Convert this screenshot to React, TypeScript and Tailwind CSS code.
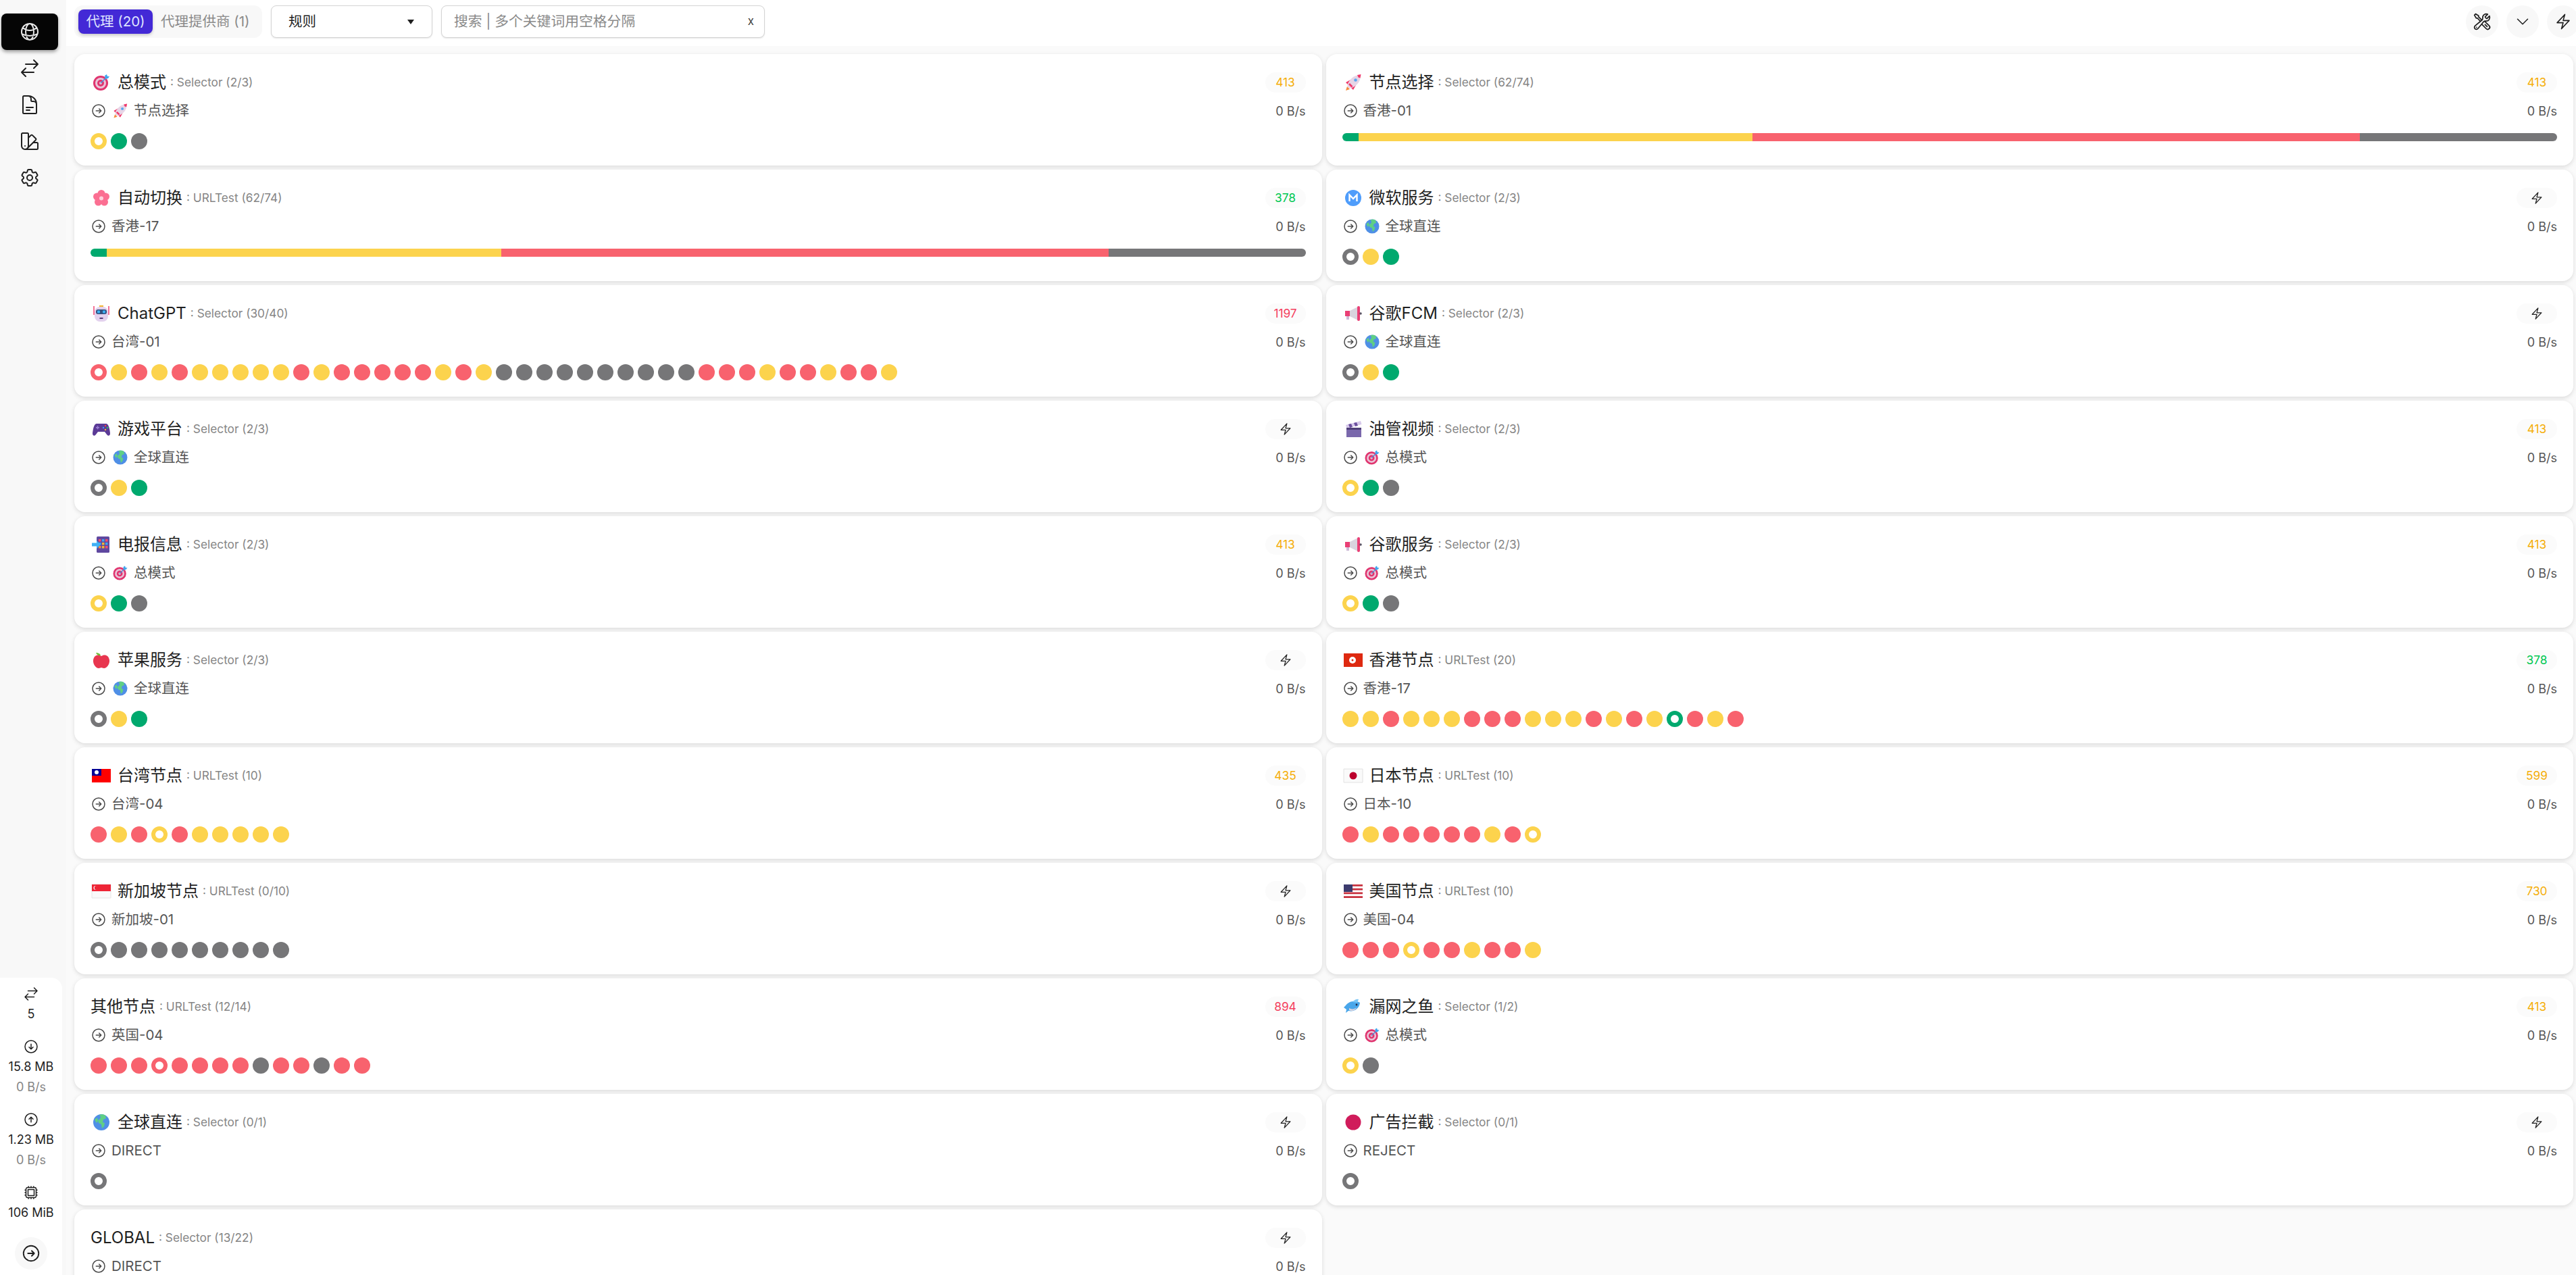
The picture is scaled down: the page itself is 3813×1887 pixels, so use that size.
import React from "react";
import {
  HiOutlineGlobeAlt,
  HiOutlineArrowsRightLeft,
  HiOutlineDocumentText,
  HiOutlineSwatch,
  HiOutlineCog6Tooth,
  HiOutlineWrenchScrewdriver,
  HiOutlineChevronDown,
  HiOutlineBolt,
  HiOutlineArrowRightCircle,
  HiOutlineArrowDownCircle,
  HiOutlineArrowUpCircle,
  HiOutlineCpuChip,
} from "react-icons/hi2";

const art: Record<string, React.ReactNode> = {
  target: (
    <>
      <circle cx="15" cy="17" r="11" fill="#e0356f" />
      <circle cx="15" cy="17" r="8" fill="#eac4d8" />
      <circle cx="15" cy="17" r="5" fill="#e0356f" />
      <circle cx="15" cy="17" r="2" fill="#eac4d8" />
      <path d="M15 17 L24 8" stroke="#4a8fd8" strokeWidth="1.6" />
      <path d="M21 6l3-2 1 3 3 0-2 3-4 1z" fill="#3fa6ee" />
    </>
  ),
  rocket: (
    <>
      <path d="M5 28l2-6 4 4z" fill="#f58b3c" />
      <path d="M12 12l-7 4 3 3 5-1zM20 20l-4 7-3-3 1-5z" fill="#f0386b" />
      <ellipse cx="17" cy="15" rx="12" ry="6" transform="rotate(-45 17 15)" fill="#e7d5e6" />
      <path d="M22 5l5.500-1-1 5.500-3-1z" fill="#f0386b" />
      <circle cx="19.500" cy="12.500" r="2.300" fill="#5aa7ef" />
      <path d="M9 19l4.500 4.500 2-2-4.500-4.500z" fill="#f0386b" />
    </>
  ),
  blossom: (
    <>
      <circle cx="16" cy="9.500" r="5.500" fill="#fb6f92" />
      <circle cx="9.500" cy="14" r="5.500" fill="#fb6f92" />
      <circle cx="22.500" cy="14" r="5.500" fill="#fb6f92" />
      <circle cx="11.500" cy="22" r="5.500" fill="#fb6f92" />
      <circle cx="20.500" cy="22" r="5.500" fill="#fb6f92" />
      <circle cx="16" cy="16.500" r="3" fill="#ffd1dc" />
    </>
  ),
  ms: (
    <>
      <circle cx="16" cy="16" r="12" fill="#4f9dfb" />
      <path d="M10.500 21V11.500L16 17l5.500-5.500V21" stroke="#fff" strokeWidth="2.400" fill="none" />
    </>
  ),
  robot: (
    <>
      <path d="M5 5v13M27 5v13" stroke="#f0386b" strokeWidth="1.400" />
      <rect x="13" y="4" width="6" height="3" fill="#f2b632" />
      <rect x="6" y="6" width="20" height="22" rx="8" fill="#e3d2ee" />
      <rect x="8" y="10" width="16" height="7" rx="3" fill="#33507d" />
      <rect x="10" y="11.500" width="4" height="4" rx="1" fill="#3fb1f5" />
      <rect x="18" y="11.500" width="4" height="4" rx="1" fill="#3fb1f5" />
      <rect x="13.500" y="22" width="5" height="2" fill="#5a3d7a" />
    </>
  ),
  mega: (
    <>
      <rect x="6" y="19" width="4" height="6" fill="#cdb8d6" />
      <rect x="4" y="12" width="7" height="8" fill="#ea3f75" />
      <path d="M11 12l12-6v20l-12-6z" fill="#d9d4de" />
      <rect x="22" y="5" width="4" height="22" rx="2" fill="#ea3f75" />
      <circle cx="27" cy="16" r="1.800" fill="#5c5566" />
    </>
  ),
  game: (
    <>
      <path d="M9 8h14c3 0 5 5 6 14 .4 4-3 5-5 2l-3-4H11l-3 4c-2 3-5.400 2-5-2C4 13 6 8 9 8z" fill="#5b3a96" />
      <rect x="8" y="13" width="5" height="1.600" fill="#9a7fd4" />
      <rect x="9.700" y="11.300" width="1.600" height="5" fill="#9a7fd4" />
      <circle cx="22" cy="11" r="1.200" fill="#ef4444" />
      <circle cx="25" cy="14" r="1.200" fill="#22c55e" />
      <circle cx="19" cy="14" r="1.200" fill="#3b9cf0" />
      <circle cx="22" cy="17" r="1.200" fill="#f2b632" />
    </>
  ),
  clap: (
    <>
      <rect x="6" y="14" width="22" height="14" fill="#7a68ac" />
      <path d="M5 10l22-6 1.500 5-22 6z" fill="#d6c8ea" />
      <path d="M9 9l4-1 2 5-4 1zM17 7l4-1 2 5-4 1z" fill="#6b4f9e" />
      <rect x="6" y="14" width="22" height="3" fill="#4f3f78" />
    </>
  ),
  tele: (
    <>
      <rect x="9" y="4" width="19" height="24" rx="1.500" fill="#5f48a0" />
      <g>
        <rect x="12" y="8" width="3.500" height="3.500" fill="#f0506e" />
        <rect x="17" y="8" width="3.500" height="3.500" fill="#3fa6ee" />
        <rect x="22" y="8" width="3.500" height="3.500" fill="#f0506e" />
        <rect x="12" y="13" width="3.500" height="3.500" fill="#3fa6ee" />
        <rect x="17" y="13" width="3.500" height="3.500" fill="#f2b632" />
        <rect x="22" y="13" width="3.500" height="3.500" fill="#3fa6ee" />
        <rect x="12" y="18" width="3.500" height="3.500" fill="#f58b3c" />
        <rect x="17" y="18" width="3.500" height="3.500" fill="#f2b632" />
        <rect x="22" y="18" width="3.500" height="3.500" fill="#f0506e" />
      </g>
      <path d="M2 13.500h7V10l6 6-6 6v-3.500H2z" fill="#3fb1f5" />
    </>
  ),
  apple: (
    <>
      <path d="M16 10c4-3 11-2 12 6 .6 6-4 12-8 12-2 0-3-1-4-1s-2 1-4 1c-4 0-8.600-6-8-12 1-8 8-9 12-6z" fill="#e8364f" />
      <path d="M15 9C14 6 11 5 8 5c1 3 4 5 7 4z" fill="#6fbf3a" />
    </>
  ),
  fish: (
    <>
      <path d="M5 14c5-7 15-8 21-4-1 9-9 14-17 12l-4 3 1-5-4-3z" fill="#49a6ea" />
      <path d="M15 9c3-4 7-5 9-4l-2 5z" fill="#7cc6f5" />
      <circle cx="21" cy="13" r="1.400" fill="#1f2d4d" />
      <path d="M10 18c3 2 8 2 11-1-2 5-8 6-11 4z" fill="#d8d2de" />
    </>
  ),
  earth: (
    <>
      <circle cx="16" cy="16" r="12" fill="#4f8fe6" />
      <path d="M13 5c3-1 7-1 9 1l1 4-4 2-1 4 3 1-1 5-3 3-1-6-4-2-1-4 3-2 1-3z" fill="#5fcf85" />
      <path d="M6 12l4-3 1 5-2 3z" fill="#5fcf85" />
    </>
  ),
  ad: <circle cx="16" cy="16" r="11.500" fill="#d01c5b" />,
  hk: (
    <>
      <path d="M2 6h28v20H2z" fill="#de2910" />
      <circle cx="15" cy="16" r="5" fill="#fff" />
      <circle cx="15" cy="16" r="1.500" fill="#de2910" />
    </>
  ),
  tw: (
    <>
      <path d="M2 6h28v20H2z" fill="#fe0000" />
      <rect x="2" y="6" width="14" height="10" fill="#000095" />
      <circle cx="9" cy="11" r="3" fill="#fff" />
    </>
  ),
  jp: (
    <>
      <path d="M2 6h28v20H2z" fill="#fafafa" stroke="#e2e2e2" strokeWidth="1" />
      <circle cx="16" cy="16" r="5.500" fill="#bc002d" />
    </>
  ),
  sg: (
    <>
      <path d="M2 6h28v20H2z" fill="#fafafa" stroke="#e6e6e6" strokeWidth="1" />
      <path d="M2 6h28v10H2z" fill="#ee2536" />
      <circle cx="7.500" cy="11" r="3" fill="#fff" />
      <circle cx="8.700" cy="11" r="3" fill="#ee2536" />
    </>
  ),
  us: (
    <>
      <path d="M2 6h28v20H2z" fill="#fff" />
      <path d="M2 6h28v2.800H2zM2 11.700h28v2.800H2zM2 17.400h28v2.800H2zM2 23.200h28V26H2z" fill="#c8313e" />
      <rect x="2" y="6" width="13" height="11" fill="#3c3b6e" />
    </>
  ),
};

function Emoji({ name, size }: { name: string; size: "title" | "now" }) {
  return (
    <svg
      viewBox="0 0 32 32"
      className={size === "title" ? "w-8 h-8 shrink-0 mr-2" : "w-7 h-7 shrink-0 -ml-[1px] mr-[6px]"}
    >
      {art[name]}
    </svg>
  );
}

const dotClass: Record<string, string> = {
  y: "bg-[#fcd34d]",
  r: "bg-[#f8626e]",
  g: "bg-[#00a96e]",
  x: "bg-[#767678]",
  Y: "bg-white border-[6px] border-[#fcd34d]",
  R: "bg-white border-[6px] border-[#f8626e]",
  G: "bg-white border-[6px] border-[#00a96e]",
  X: "bg-white border-[6px] border-[#767678]",
};

function Dots({ s }: { s: string }) {
  return (
    <div className="flex gap-[6px] h-6">
      {s.split("").map((c, i) => (
        <span key={i} className={"w-6 h-6 rounded-full " + dotClass[c]} />
      ))}
    </div>
  );
}

function Bar() {
  const segs: [number, string][] = [
    [1, "bg-[#00a96e]"],
    [24, "bg-[#fcd34d]"],
    [37, "bg-[#f8626e]"],
    [12, "bg-[#767678]"],
  ];
  return (
    <div className="flex h-3 mt-[6px] rounded-full overflow-hidden">
      {segs.map(([n, c], i) => (
        <div key={i} className={c} style={{ flexGrow: n, flexBasis: 0 }} />
      ))}
    </div>
  );
}

type P = {
  t: string;
  e?: string;
  k: string;
  lat?: string;
  lc?: string;
  nowE?: string;
  now: string;
  dots?: string;
};

const Y = "text-[#f5ae0a]";
const G = "text-[#00c853]";
const R = "text-[#f43f5e]";

const proxies: P[] = [
  { t: "总模式", e: "target", k: "Selector (2/3)", lat: "413", lc: Y, nowE: "rocket", now: "节点选择", dots: "Ygx" },
  { t: "节点选择", e: "rocket", k: "Selector (62/74)", lat: "413", lc: Y, now: "香港-01" },
  { t: "自动切换", e: "blossom", k: "URLTest (62/74)", lat: "378", lc: G, now: "香港-17" },
  { t: "微软服务", e: "ms", k: "Selector (2/3)", nowE: "earth", now: "全球直连", dots: "Xyg" },
  { t: "ChatGPT", e: "robot", k: "Selector (30/40)", lat: "1197", lc: R, now: "台湾-01", dots: "Ryryryyyyyryrrrrryryxxxxxxxxxxrrryrryrry" },
  { t: "谷歌FCM", e: "mega", k: "Selector (2/3)", nowE: "earth", now: "全球直连", dots: "Xyg" },
  { t: "游戏平台", e: "game", k: "Selector (2/3)", nowE: "earth", now: "全球直连", dots: "Xyg" },
  { t: "油管视频", e: "clap", k: "Selector (2/3)", lat: "413", lc: Y, nowE: "target", now: "总模式", dots: "Ygx" },
  { t: "电报信息", e: "tele", k: "Selector (2/3)", lat: "413", lc: Y, nowE: "target", now: "总模式", dots: "Ygx" },
  { t: "谷歌服务", e: "mega", k: "Selector (2/3)", lat: "413", lc: Y, nowE: "target", now: "总模式", dots: "Ygx" },
  { t: "苹果服务", e: "apple", k: "Selector (2/3)", nowE: "earth", now: "全球直连", dots: "Xyg" },
  { t: "香港节点", e: "hk", k: "URLTest (20)", lat: "378", lc: G, now: "香港-17", dots: "yyryyyrrryyyryryGryr" },
  { t: "台湾节点", e: "tw", k: "URLTest (10)", lat: "435", lc: Y, now: "台湾-04", dots: "ryrYryyyyy" },
  { t: "日本节点", e: "jp", k: "URLTest (10)", lat: "599", lc: Y, now: "日本-10", dots: "ryrrrrryrY" },
  { t: "新加坡节点", e: "sg", k: "URLTest (0/10)", now: "新加坡-01", dots: "Xxxxxxxxxx" },
  { t: "美国节点", e: "us", k: "URLTest (10)", lat: "730", lc: Y, now: "美国-04", dots: "rrrYrryrry" },
  { t: "其他节点", k: "URLTest (12/14)", lat: "894", lc: R, now: "英国-04", dots: "rrrRrrrrxrrxrr" },
  { t: "漏网之鱼", e: "fish", k: "Selector (1/2)", lat: "413", lc: Y, nowE: "target", now: "总模式", dots: "Yx" },
  { t: "全球直连", e: "earth", k: "Selector (0/1)", now: "DIRECT", dots: "X" },
  { t: "广告拦截", e: "ad", k: "Selector (0/1)", now: "REJECT", dots: "X" },
  { t: "GLOBAL", k: "Selector (13/22)", now: "DIRECT", dots: "X" },
];

function Card({ p }: { p: P }) {
  return (
    <div className="bg-white rounded-2xl h-[165px] px-6 pt-6 shadow-[0_2px_6px_rgba(0,0,0,0.13)]">
      <div className="flex items-center h-9">
        {p.e && <Emoji name={p.e} size="title" />}
        <span className="text-[24px] text-[#1f1f1f] whitespace-nowrap">{p.t}</span>
        <span className="text-[17.3px] text-[#858585] ml-[6px] whitespace-nowrap">: {p.k}</span>
        <span
          className={
            "ml-auto w-[60px] h-[30px] rounded-full bg-[#fbfbfb] flex items-center justify-center text-[17.3px] " +
            (p.lc ?? "text-[#222]")
          }
        >
          {p.lat ?? <HiOutlineBolt className="w-5 h-5" />}
        </span>
      </div>
      <div className="flex items-center h-6 mt-3">
        <HiOutlineArrowRightCircle className="w-6 h-6 shrink-0 text-[#4a4a4a] mr-[7px]" />
        {p.nowE && <Emoji name={p.nowE} size="now" />}
        <span className="text-[20.5px] text-[#555] whitespace-nowrap">{p.now}</span>
        <span className="ml-auto text-[18px] text-[#555]">0 B/s</span>
      </div>
      <div className="mt-[21px]">{p.dots ? <Dots s={p.dots} /> : <Bar />}</div>
    </div>
  );
}

function Nav({ children, active }: { children: React.ReactNode; active?: boolean }) {
  return (
    <div
      className={
        "w-[84px] h-[54px] rounded-lg flex items-center justify-center " +
        (active ? "bg-[#050505] text-[#e8e8e8] shadow-[0_3px_5px_rgba(0,0,0,0.35)]" : "text-[#1f1f1f]")
      }
    >
      {children}
    </div>
  );
}

function Round({ children }: { children: React.ReactNode }) {
  return (
    <div className="w-12 h-12 rounded-full bg-[#f8f8f8] flex items-center justify-center text-[#1f1f1f] shrink-0">
      {children}
    </div>
  );
}

export default function App() {
  const ic = "w-6 h-6";
  const nav = "w-8 h-8";
  return (
    <div className="flex h-screen w-screen overflow-hidden bg-[#f8f8f8] font-[Inter,'Noto_Sans_CJK_SC',sans-serif]">
      <aside className="w-[98px] shrink-0 flex flex-col">
        <nav className="pt-5 pl-[2px] flex flex-col">
          <Nav active>
            <HiOutlineGlobeAlt className={nav} />
          </Nav>
          <Nav>
            <HiOutlineArrowsRightLeft className={nav} />
          </Nav>
          <Nav>
            <HiOutlineDocumentText className={nav} />
          </Nav>
          <Nav>
            <HiOutlineSwatch className={nav} />
          </Nav>
          <Nav>
            <HiOutlineCog6Tooth className={nav} />
          </Nav>
        </nav>
        <div className="mt-auto w-[92px] bg-white rounded-tr-2xl flex flex-col items-center pt-3 pb-2 text-[18px] leading-[30px] text-[#1f1f1f]">
          <HiOutlineArrowsRightLeft className={ic} />
          <span className="mt-[3px]">5</span>
          <HiOutlineArrowDownCircle className={ic + " mt-[21px]"} />
          <span className="mt-[3px] whitespace-nowrap">15.8 MB</span>
          <span className="text-[#858585]">0 B/s</span>
          <HiOutlineArrowUpCircle className={ic + " mt-[21px]"} />
          <span className="mt-[3px] whitespace-nowrap">1.23 MB</span>
          <span className="text-[#858585]">0 B/s</span>
          <HiOutlineCpuChip className={ic + " mt-[21px]"} />
          <span className="mt-[3px] whitespace-nowrap">106 MiB</span>
          <div className="mt-[21px]">
            <Round>
              <HiOutlineArrowRightCircle className="w-[30px] h-[30px]" />
            </Round>
          </div>
        </div>
      </aside>
      <main className="flex-1 min-w-0 flex flex-col bg-[#fafafa]">
        <header className="h-[68px] shrink-0 bg-white flex items-start pt-2 pl-3 -mr-[5px]">
          <div className="h-12 w-[278px] rounded-xl bg-[#f8f8f8] flex items-center px-[6px] text-[20.500px] whitespace-nowrap">
            <span className="h-9 w-[110px] rounded-lg bg-[#4329d6] text-[#dfe3ff] flex items-center justify-center shadow-[0_2px_4px_rgba(0,0,0,0.2)]">
              代理 (20)
            </span>
            <span className="ml-3 text-[#8a8a8a]">代理提供商 (1)</span>
          </div>
          <div className="ml-[13px] h-12 w-[239px] rounded-lg border border-[#d4d4d4] bg-white flex items-center pl-[25px] pr-[26px] text-[20.500px] text-[#1f1f1f] shadow-[0_1px_2px_rgba(0,0,0,0.1)]">
            规则
            <span className="ml-auto w-0 h-0 border-x-[5px] border-x-transparent border-t-[7px] border-t-[#1f1f1f]" />
          </div>
          <div className="ml-[13px] h-12 w-[479px] rounded-lg border border-[#d4d4d4] bg-white flex items-center pl-[18px] pr-[15px] text-[20.800px] text-[#8a8a8a] shadow-[0_1px_2px_rgba(0,0,0,0.1)]">
            搜索 | 多个关键词用空格分隔
            <span className="ml-auto text-[17px] text-[#444]">x</span>
          </div>
          <div className="ml-auto flex gap-3">
            <Round>
              <HiOutlineWrenchScrewdriver className="w-7 h-7" />
            </Round>
            <Round>
              <HiOutlineChevronDown className="w-6 h-6" />
            </Round>
            <Round>
              <HiOutlineBolt className="w-[26px] h-[26px]" />
            </Round>
          </div>
        </header>
        <div className="grid grid-cols-2 gap-[6px] pl-3 pr-1 pt-3">
          {proxies.map((p) => (
            <Card key={p.t} p={p} />
          ))}
        </div>
      </main>
    </div>
  );
}
